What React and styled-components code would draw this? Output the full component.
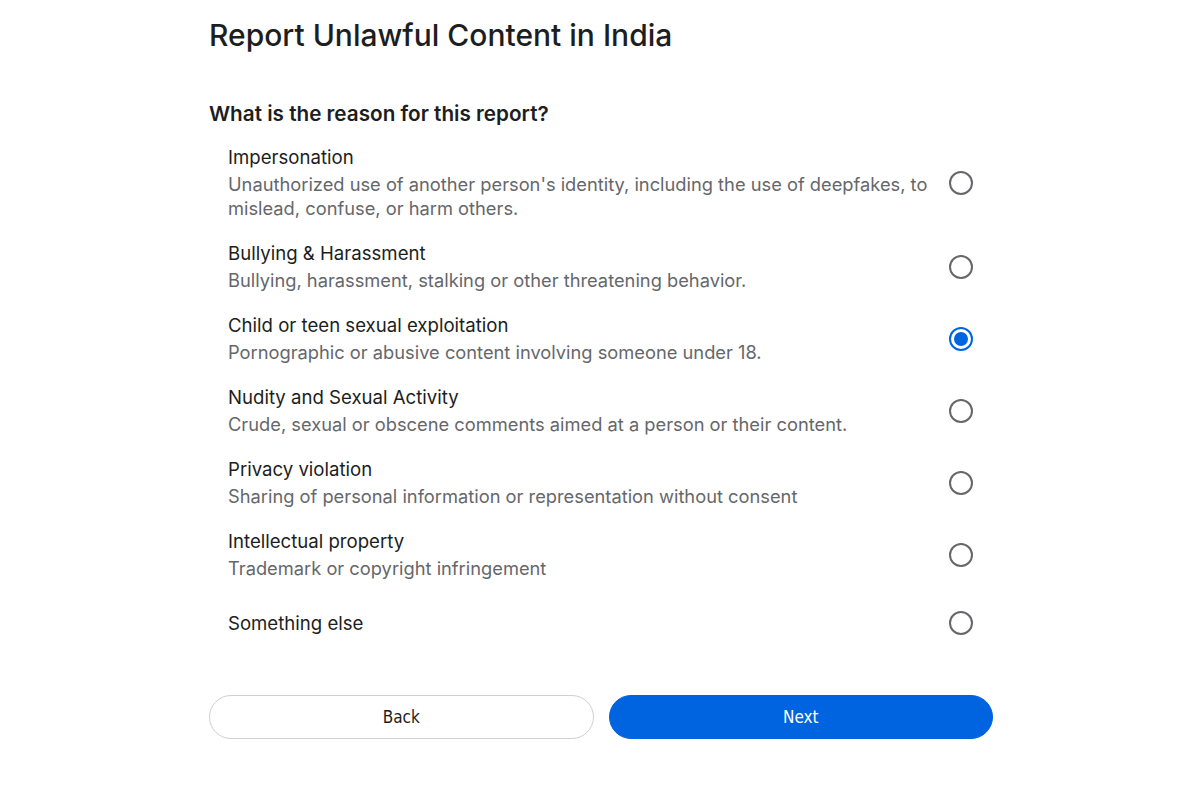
import React, { useState } from 'react';
import styled, { createGlobalStyle } from 'styled-components';

const GlobalStyle = createGlobalStyle`
  body {
    margin: 0;
    background: #fff;
    font-family: Inter, "Noto Sans", sans-serif;
    color: #1c1e21;
  }
`;

const Page = styled.div`
  width: 784px;
  margin: 0 0 0 209px;
  padding-top: 15px;
`;

const Title = styled.h1`
  font-size: 30px;
  font-weight: 500;
  line-height: 40px;
  margin: 0;
`;

const Question = styled.h2`
  font-size: 20.7px;
  font-weight: 600;
  line-height: 26px;
  margin: 46px 0 7px;
`;

const List = styled.div`
  display: flex;
  flex-direction: column;
`;

const Row = styled.label`
  display: flex;
  align-items: center;
  justify-content: space-between;
  gap: 16px;
  padding: ${p => (p.$plain ? '21px 20px 21px 19px' : '11px 20px 10px 19px')};
  cursor: pointer;
`;

const Text = styled.div`
  display: flex;
  flex-direction: column;
  gap: 3px;
`;

const Name = styled.span`
  font-size: 18.6px;
  line-height: 24px;
  color: #1c1e21;
`;

const Desc = styled.span`
  font-size: 18.3px;
  line-height: 24px;
  color: #65676b;
`;

const Radio = styled.span`
  flex: none;
  width: 24px;
  height: 24px;
  box-sizing: border-box;
  border-radius: 50%;
  border: 2px solid ${p => (p.$on ? '#0064e0' : '#65676b')};
  display: flex;
  align-items: center;
  justify-content: center;

  &::after {
    content: '';
    width: 14px;
    height: 14px;
    border-radius: 50%;
    background: #0064e0;
    display: ${p => (p.$on ? 'block' : 'none')};
  }
`;

const Footer = styled.div`
  display: grid;
  grid-template-columns: 1fr 1fr;
  gap: 15px;
  margin-top: 39px;
`;

const Button = styled.button`
  height: 44px;
  border-radius: 22px;
  font-family: "DejaVu Sans Condensed", "DejaVu Sans", sans-serif;
  font-size: 17px;
  cursor: pointer;
  border: 1px solid ${p => (p.$primary ? '#0064e0' : '#ced0d4')};
  background: ${p => (p.$primary ? '#0064e0' : '#fff')};
  color: ${p => (p.$primary ? '#fff' : '#1c1e21')};
`;

const reasons = [
  {
    name: 'Impersonation',
    desc: "Unauthorized use of another person's identity, including the use of deepfakes, to mislead, confuse, or harm others.",
  },
  { name: 'Bullying & Harassment', desc: 'Bullying, harassment, stalking or other threatening behavior.' },
  { name: 'Child or teen sexual exploitation', desc: 'Pornographic or abusive content involving someone under 18.' },
  { name: 'Nudity and Sexual Activity', desc: 'Crude, sexual or obscene comments aimed at a person or their content.' },
  { name: 'Privacy violation', desc: 'Sharing of personal information or representation without consent' },
  { name: 'Intellectual property', desc: 'Trademark or copyright infringement' },
  { name: 'Something else' },
];

const App = () => {
  const [picked, setPicked] = useState(2);

  return (
    <Page>
      <GlobalStyle />
      <Title>Report Unlawful Content in India</Title>
      <Question>What is the reason for this report?</Question>
      <List>
        {reasons.map((r, i) => (
          <Row key={r.name} $plain={!r.desc} onClick={() => setPicked(i)}>
            <Text>
              <Name>{r.name}</Name>
              {r.desc && <Desc>{r.desc}</Desc>}
            </Text>
            <Radio $on={picked === i} />
          </Row>
        ))}
      </List>
      <Footer>
        <Button>Back</Button>
        <Button $primary>Next</Button>
      </Footer>
    </Page>
  );
};

export default App;
